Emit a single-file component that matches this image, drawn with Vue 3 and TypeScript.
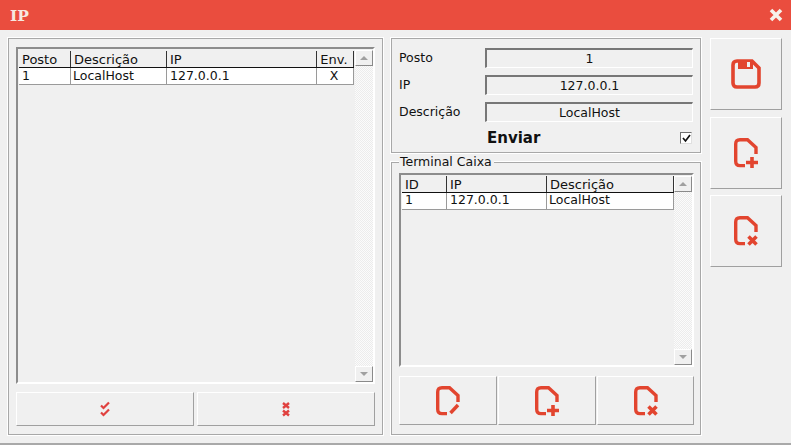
<script setup lang="ts">
const postos = [{ posto: '1', desc: 'LocalHost', ip: '127.0.0.1', env: 'X' }]
const caixas = [{ id: '1', ip: '127.0.0.1', desc: 'LocalHost' }]
const fields = [
  { label: 'Posto', value: '1' },
  { label: 'IP', value: '127.0.0.1' },
  { label: 'Descrição', value: 'LocalHost' },
]
const docBody = 'M11 27.6H6Q1.7 27.6 1.7 23.3V6Q1.7 1.7 6 1.7H13.5L22 9.5V16'
</script>

<template>
  <div class="window">
    <header class="titlebar">
      <span class="title">IP</span>
      <svg class="close" width="14" height="14" viewBox="0 0 14 14">
        <path d="M2 2L12 12M12 2L2 12" stroke="#f6f1ea" stroke-width="3.6" />
      </svg>
    </header>

    <main class="body">
      <section class="panel left">
        <div class="grid-box left-grid">
          <div class="grid-area">
            <div class="row head cols-a">
              <span>Posto</span><span>Descrição</span><span>IP</span><span class="center">Env.</span>
            </div>
            <div v-for="r in postos" :key="r.posto" class="row data cols-a">
              <span>{{ r.posto }}</span><span class="tight">{{ r.desc }}</span><span>{{ r.ip }}</span><span class="center">{{ r.env }}</span>
            </div>
          </div>
          <div class="scroll">
            <div class="arrow"><i class="tri up"></i></div>
            <div class="track"></div>
            <div class="arrow"><i class="tri down"></i></div>
          </div>
        </div>
        <div class="left-actions">
          <button class="btn">
            <svg width="10" height="16" viewBox="0 0 10 16" fill="none" stroke="#e0413f" stroke-width="2.2">
              <path d="M1 4.5L3.5 7L9 1.5M1 11.5L3.5 14L9 8.5" />
            </svg>
          </button>
          <button class="btn">
            <svg width="8" height="16" viewBox="0 0 8 16" fill="none" stroke="#e0413f" stroke-width="2.4">
              <path d="M1 2L7 7M7 2L1 7M1 9.5L7 14.5M7 9.5L1 14.5" />
            </svg>
          </button>
        </div>
      </section>

      <div class="middle">
        <section class="panel form">
          <div v-for="f in fields" :key="f.label" class="field">
            <span class="label">{{ f.label }}</span>
            <span class="value">{{ f.value }}</span>
          </div>
          <div class="send">
            <strong>Enviar</strong>
            <span class="check">
              <svg width="9" height="9" viewBox="0 0 9 9" fill="none" stroke="#111" stroke-width="1.7">
                <path d="M1 4L3.5 7L8 1" />
              </svg>
            </span>
          </div>
        </section>

        <section class="panel terminal">
          <span class="legend">Terminal Caixa</span>
          <div class="grid-box term-grid">
            <div class="grid-area">
              <div class="row head cols-b">
                <span>ID</span><span>IP</span><span>Descrição</span>
              </div>
              <div v-for="r in caixas" :key="r.id" class="row data cols-b">
                <span>{{ r.id }}</span><span>{{ r.ip }}</span><span class="tight">{{ r.desc }}</span>
              </div>
            </div>
            <div class="scroll">
              <div class="arrow"><i class="tri up"></i></div>
              <div class="track"></div>
              <div class="arrow"><i class="tri down"></i></div>
            </div>
          </div>
          <div class="term-actions">
            <button class="btn">
              <svg width="24" height="30" viewBox="0 0 24 30" fill="none" stroke="#e2452f" stroke-width="3.4">
                <path :d="docBody" />
                <path d="M22 19L14.5 27" />
              </svg>
            </button>
            <button class="btn">
              <svg width="24" height="30" viewBox="0 0 24 30" fill="none" stroke="#e2452f" stroke-width="3.4">
                <path :d="docBody" />
                <path d="M12 24.5H24M18 19V30" stroke-width="3.6" />
              </svg>
            </button>
            <button class="btn">
              <svg width="24" height="30" viewBox="0 0 24 30" fill="none" stroke="#e2452f" stroke-width="3.4">
                <path :d="docBody" />
                <path d="M14.5 20.5L22.5 28.5M22.5 20.5L14.5 28.5" stroke-width="3.6" />
              </svg>
            </button>
          </div>
        </section>
      </div>

      <aside class="side">
        <button class="btn side-btn">
          <svg width="30" height="30" viewBox="0 0 30 30" fill="none">
            <path d="M6 2H21L28 9V24Q28 28 24 28H6Q2 28 2 24V6Q2 2 6 2Z" stroke="#e2452f" stroke-width="3.6" />
            <path d="M7 2H22V10H7Z" fill="#e2452f" />
            <rect x="16" y="3" width="3" height="5" fill="#f0f0f0" />
          </svg>
        </button>
        <button class="btn side-btn">
          <svg width="24" height="30" viewBox="0 0 24 30" fill="none" stroke="#e2452f" stroke-width="3.4">
            <path :d="docBody" />
            <path d="M12 24.5H24M18 19V30" stroke-width="3.6" />
          </svg>
        </button>
        <button class="btn side-btn">
          <svg width="24" height="30" viewBox="0 0 24 30" fill="none" stroke="#e2452f" stroke-width="3.4">
            <path :d="docBody" />
            <path d="M14.5 20.5L22.5 28.5M22.5 20.5L14.5 28.5" stroke-width="3.6" />
          </svg>
        </button>
      </aside>
    </main>
  </div>
</template>

<style>
html, body { margin: 0; background: #f0f0f0; }
</style>

<style scoped>
.window {
  width: 791px;
  height: 445px;
  box-sizing: border-box;
  overflow: hidden;
  background: #f0f0f0;
  border-bottom: 2px solid #a9a9a9;
  font: 12.5px/16px "DejaVu Sans", sans-serif;
  color: #111;
}
.titlebar {
  height: 30px;
  background: #ea4d3e;
  display: flex;
  align-items: center;
  justify-content: space-between;
  padding: 0 8px 0 10px;
}
.title { font: bold 15.5px "DejaVu Serif", serif; color: #f6e8e0; }
.close { display: block; }
.body {
  display: flex;
  gap: 8px;
  padding: 8px 8px 0;
}
.panel {
  box-sizing: border-box;
  border: 1px solid #a8a8a8;
  box-shadow: 0 0 0 1px #fff;
}
.left {
  width: 375px;
  height: 397px;
  padding: 8px 7px 0;
  display: flex;
  flex-direction: column;
}
.grid-box {
  box-sizing: border-box;
  display: flex;
  border-top: 2px solid #8c8c8c;
  border-left: 2px solid #8c8c8c;
  border-bottom: 2px solid #fff;
  border-right: 2px solid #fff;
}
.left-grid { width: 359px; height: 337px; }
.term-grid { width: 295px; height: 194px; margin-top: 3px; }
.grid-area { flex: 1; min-width: 0; padding-left: 1px; }
.left-grid .grid-area { padding-top: 2px; }
.term-grid .grid-area { padding-top: 1px; }
.row { display: grid; height: 17px; box-sizing: border-box; width: max-content; }
.row span { padding-left: 3px; overflow: hidden; white-space: nowrap; border-right: 1px solid #9a9a9a; }
.cols-a { grid-template-columns: 52px 96px 150px 37px; }
.cols-b { grid-template-columns: 45px 100px 127px; }
.head { border-bottom: 1px solid #111; }
.head span { border-right-color: #333; font-size: 13px; line-height: 17px; }
.data { background: #fff; border-bottom: 1px solid #9a9a9a; }
.data span { line-height: 15px; }
.term-grid .data span { line-height: 13px; }
.data .tight { padding-left: 2px; }
.row .center { text-align: center; padding-left: 0; padding-right: 2px; }
.scroll { width: 18px; display: flex; flex-direction: column; padding-top: 1px; }
.track {
  flex: 1;
  background-color: #fbfbfb;
  background-image: repeating-conic-gradient(#ececec 0 25%, #fbfbfb 0 50%);
  background-size: 2px 2px;
}
.arrow {
  height: 16px;
  box-sizing: border-box;
  background: #f0f0f0;
  border: 1px solid;
  border-color: #fff #8a8a8a #8a8a8a #fff;
  display: flex;
  align-items: center;
  justify-content: center;
}
.tri { width: 0; height: 0; border-left: 4px solid transparent; border-right: 4px solid transparent; }
.tri.up { border-bottom: 4px solid #a0a0a0; }
.tri.down { border-top: 4px solid #a0a0a0; }
.btn {
  box-sizing: border-box;
  padding: 0;
  margin: 0;
  background: #f0f0f0;
  border: 1px solid;
  border-color: #fff #a0a0a0 #a0a0a0 #fff;
  display: flex;
  align-items: center;
  justify-content: center;
}
.left-actions {
  display: grid;
  grid-template-columns: 178px 178px;
  gap: 3px;
  height: 34px;
  margin-top: 8px;
}
.middle {
  width: 310px;
  display: flex;
  flex-direction: column;
  gap: 9px;
}
.form {
  height: 115px;
  padding: 9px 7px 0 7px;
}
.field {
  display: flex;
  align-items: center;
  height: 20px;
  margin-bottom: 7px;
}
.label { width: 86px; }
.value {
  flex: 1;
  height: 20px;
  box-sizing: border-box;
  text-align: center;
  line-height: 17px;
  border-top: 2px solid #777;
  border-left: 2px solid #777;
  border-right: 1px solid #fff;
  border-bottom: 1px solid #fff;
}
.send {
  display: flex;
  align-items: center;
  justify-content: space-between;
  margin-top: -1px;
  padding: 0 1px 0 88px;
}
.send strong { font: bold 15px/20px "DejaVu Sans", sans-serif; color: #111; }
.check {
  width: 12px;
  height: 12px;
  box-sizing: border-box;
  background: #fff;
  border: 1px solid;
  border-color: #707070 #e0e0e0 #e0e0e0 #707070;
  display: flex;
  align-items: center;
  justify-content: center;
}
.terminal {
  height: 273px;
  padding: 7px 7px 0;
  position: relative;
}
.legend {
  position: absolute;
  left: 7px;
  top: -9px;
  padding: 0 2px 0 1px;
  background: #f0f0f0;
}
.term-actions {
  display: grid;
  grid-template-columns: 98px 98px 97px;
  gap: 1px;
  height: 49px;
  margin-top: 9px;
}
.side {
  width: 72px;
  margin-left: 1px;
  display: flex;
  flex-direction: column;
  gap: 6px;
}
.side-btn { height: 72px; }
.side-btn:nth-child(2) { margin-top: 1px; }
</style>
